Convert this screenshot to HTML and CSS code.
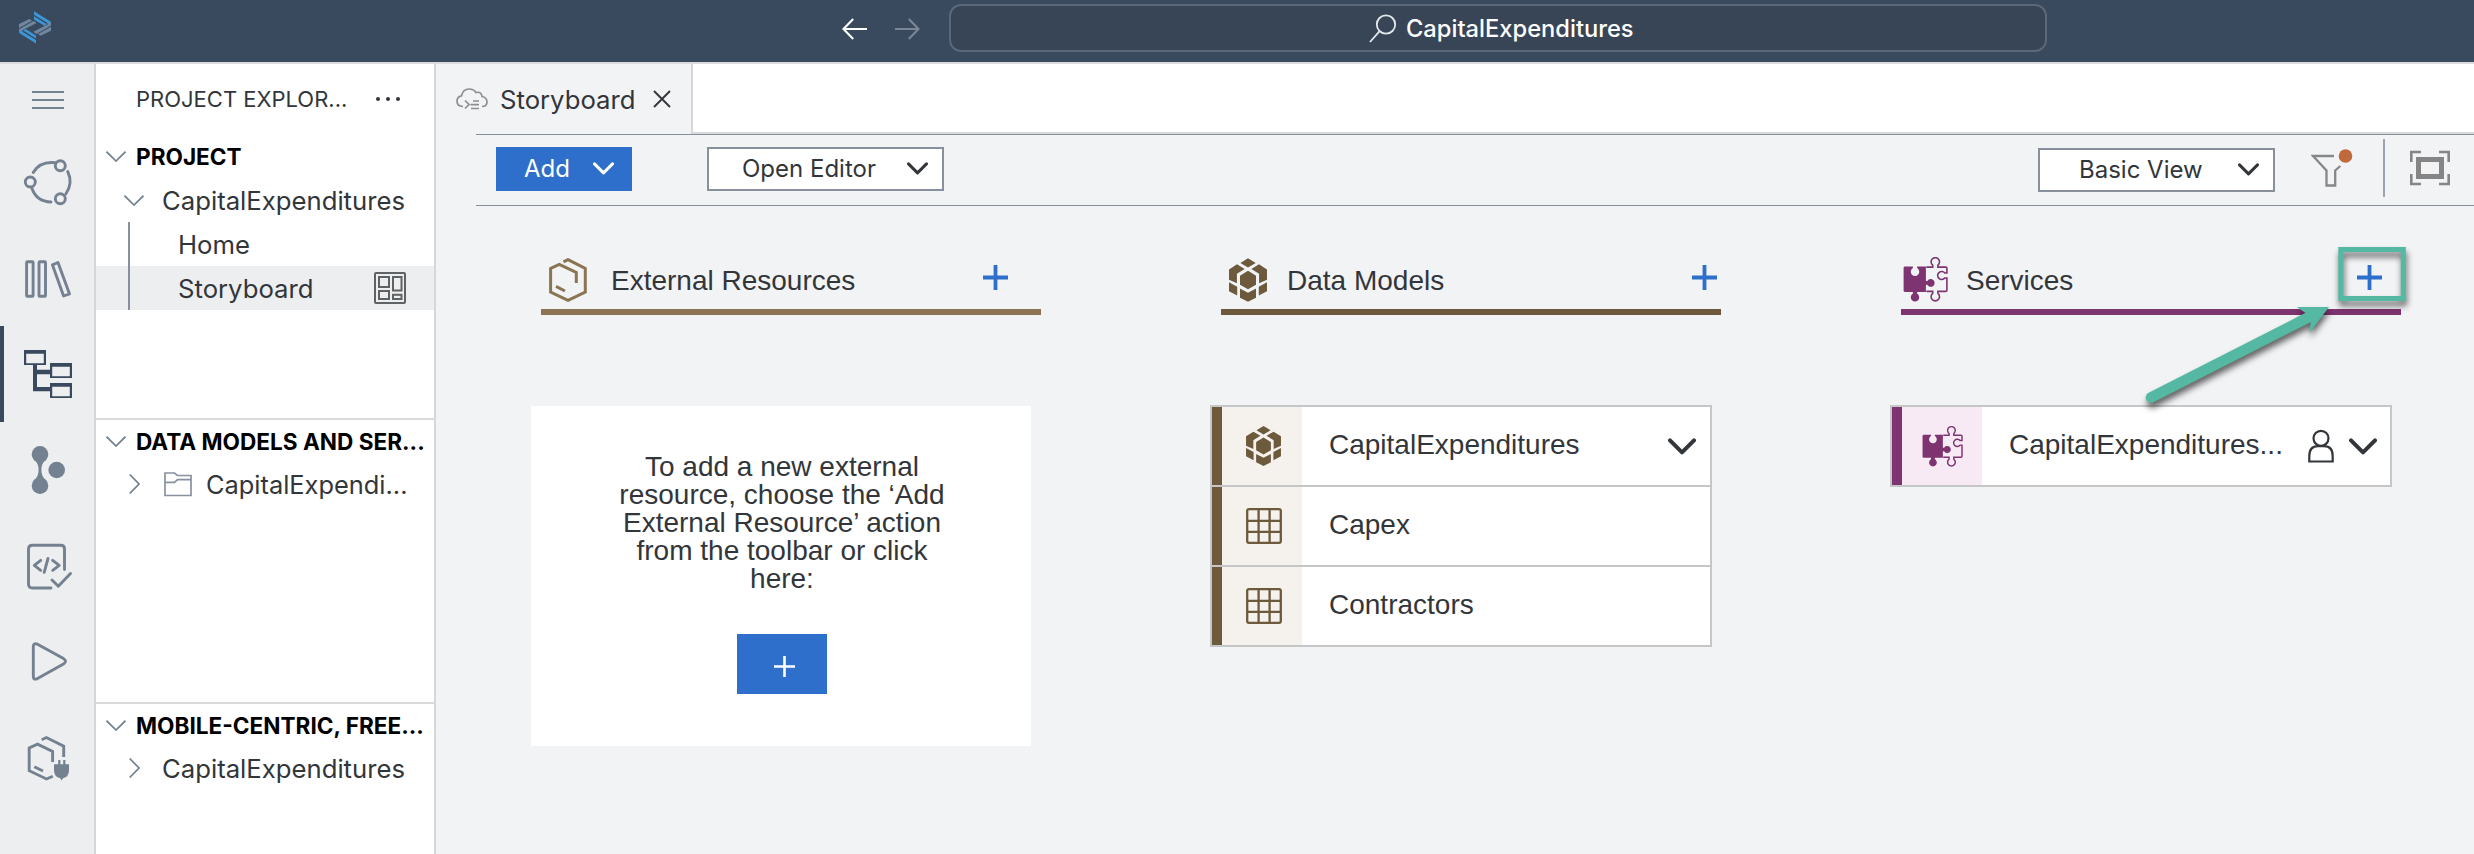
FILE: index.html
```html
<!DOCTYPE html>
<html lang="en">
<head>
<meta charset="utf-8">
<title>CapitalExpenditures</title>
<link rel="stylesheet" href="styles.css">
</head>
<body>
<svg class="defs" width="0" height="0" aria-hidden="true">
  <symbol id="cube" viewBox="0 0 38.4 44">
    <path fill="currentColor" d="M11.5 4.7 19.2 0 27 4.7 19.2 9.3zM0 11.3 8.1 6.2 15.8 10.8 8 15.6V25.4L0 21.7zM38.4 11.3 30.3 6.2 22.6 10.8 30.4 15.6V25.4L38.4 21.7zM11.1 17.7 19.2 12.7 27.3 17.7V26.7L19.2 31.3 11.1 26.7zM0 24.3 8.3 28.7V37.7L0 33.3zM38.4 24.3 30.1 28.7V37.7L38.4 33.3zM11.1 30.7 19.2 34.9 27.3 30.7V40L19.2 44 11.1 40z"/>
  </symbol>
  <symbol id="puzzle" viewBox="1902.7 256.4 45 45">
    <path fill="currentColor" d="M1904.6 266H1912.6V267.5A4.2 4.2 0 1 0 1916.8 267.5V266H1925.6V280.4H1927A3.9 3.9 0 1 1 1927 284.2H1925.6V291.3H1916.8V293A4.2 4.2 0 1 1 1912.6 293V291.3H1904.6A1.3 1.3 0 0 1 1903.3 290V267.3A1.3 1.3 0 0 1 1904.6 266z"/>
    <path fill="none" stroke="currentColor" stroke-width="1.6" d="M1926 266.5H1932.4V264.6A4.2 4.2 0 1 1 1937.6 264.6V266.5H1945.4A1.2 1.2 0 0 1 1946.6 267.7V272.4H1944.5A4 4 0 1 0 1944.5 277.4H1946.6V289.6A1.2 1.2 0 0 1 1945.4 290.8H1937.6V292.8A4.2 4.2 0 1 1 1932.4 292.8V290.8H1926"/>
  </symbol>
  <symbol id="table" viewBox="0 0 36 36">
    <g fill="none" stroke="currentColor" stroke-width="2.3"><rect x="1.2" y="1.2" width="33.6" height="33.6" rx="1.8"/><path d="M12.6 1V35M23.6 1V35M1 12.8H35M1 23.9H35"/></g>
  </symbol>
  <symbol id="down" viewBox="0 0 28 17"><path fill="none" stroke="currentColor" stroke-width="4" stroke-linecap="round" stroke-linejoin="round" d="M2 2.3 14 14.3 26 2.3"/></symbol>
  <symbol id="plus" viewBox="0 0 25 25"><path stroke="currentColor" stroke-width="3.8" d="M0 12.5H25M12.5 0V25"/></symbol>
  <symbol id="twist-open" viewBox="0 0 20 11"><path fill="none" stroke="#748190" stroke-width="1.7" d="M.5.7 10 10 19.5.7"/></symbol>
  <symbol id="twist-closed" viewBox="0 0 11 20"><path fill="none" stroke="#748190" stroke-width="1.7" d="M.7.5 10 10 .7 19.5"/></symbol>
</svg>

<header class="topbar">
  <svg class="logo" viewBox="18 10 34 35" width="34" height="35">
    <g id="half"><path fill="#3c97d8" d="M34 11.3 50.8 21.8V25L34 14.8zM34 16.2 46.8 24.2 44.4 25.8 34 19.4z"/>
    <path fill="#71879f" d="M19 24 29.5 19 32 20.8 19 28zM19 29.3 33.6 20.9 36.6 23 19 32zM24 31 19 32.2V30z"/></g>
    <use href="#half" transform="rotate(180 35 27.4)"/>
  </svg>
  <div class="nav">
    <svg width="25" height="22" viewBox="0 0 25 22"><path fill="none" stroke="#fff" stroke-width="2.1" d="M25 11H1.5M11.2 1 1.5 11 11.2 21"/></svg>
    <svg width="25" height="22" viewBox="0 0 25 22"><path fill="none" stroke="#7b8796" stroke-width="2.1" d="M0 11H23.5M13.8 1 23.5 11 13.8 21"/></svg>
  </div>
  <div class="search">
    <svg width="28" height="29" viewBox="0 0 28 29"><g fill="none" stroke="#e4e8ec" stroke-width="1.8"><circle cx="17" cy="10.5" r="9.2"/><path d="M10.6 17.2 1 28"/></g></svg>
    <span>CapitalExpenditures</span>
  </div>
</header>

<div class="workbench">
  <nav class="rail">
    <svg class="rail-menu" viewBox="0 64 94 70"><path stroke="#748190" stroke-width="2" d="M32 92H64M32 100H64M32 108H64"/></svg>
    <svg viewBox="0 134 94 96"><g class="ln"><circle cx="30.3" cy="182" r="5"/><circle cx="60.3" cy="165.7" r="5"/><circle cx="60.3" cy="198.7" r="5"/><path d="M33.2 172.5Q40 161 55.3 162.7M32 188.5Q36.5 201.5 51 202M67.7 171.5Q73.3 183 65.8 194"/></g></svg>
    <svg viewBox="0 230 94 96"><g class="ln"><rect x="26.6" y="261.8" width="6.5" height="34.5" rx=".8"/><rect x="39" y="261.8" width="6.5" height="34.5" rx=".8"/><path d="M52.4 264.8 58 262.5 69.5 294 63.6 296z"/></g></svg>
    <svg class="active" viewBox="0 326 94 96"><path fill="#39495e" fill-rule="evenodd" d="M24 350H46V365H37V369.7H50V363H72V378H50V374.3H37V387H50V383H72V398H50V391.3H33V365H24zM26.2 353.8V363.2H43.8V353.8zM52.2 366.8V376.2H69.8V366.8zM52.2 386.8V396.2H69.8V386.8z"/></svg>
    <svg viewBox="0 422 94 96"><g fill="#748190"><circle cx="40" cy="454.3" r="8.3"/><circle cx="40" cy="485.7" r="8.3"/><circle cx="56.7" cy="470" r="8.3"/><path d="M33 458.5Q38.8 463 38.6 470 38.8 477 33 481.5H47Q41.2 477 41.4 470 41.2 463 47 458.5z"/></g></svg>
    <svg viewBox="0 518 94 96"><g class="ln"><path d="M64.5 569.5V549Q64.5 545.2 60.8 545.2H32.5Q28.5 545.2 28.5 549V584Q28.5 588 32.5 588H51M52 580 58.3 586.2 70.5 573.5M40.7 560.3 34.3 565.3 40.7 570.3M48 558.5 44.2 572.3M52.7 560.3 59.2 565.3 52.7 570.3"/></g></svg>
    <svg viewBox="0 614 94 96"><path class="ln" d="M33.3 646.5Q33.3 642.5 37.5 644.2L63.5 658.6Q67.5 661.3 63.5 664L37.5 678.6Q33.3 680.5 33.3 676z"/></svg>
    <svg viewBox="0 710 94 96"><path class="ln sharp" d="M41.7 739.7 46.4 737.5 63.7 746.2V757M52.6 762V751.5L37.5 744.2 29.2 748V770.7L46.5 779 52.8 776.2M34.3 766.8 43 771"/><path fill="#748190" d="M58.2 760H60.4V764.3H63.2V760H65.4V764.3H69V770Q69 777 63 778.3L61.6 780.5 60.3 778.3Q54 777 54 770V764.3H58.2z"/></svg>
  </nav>

  <aside class="explorer">
    <div class="explorer-title"><span>PROJECT EXPLOR...</span><svg width="26" height="6" viewBox="0 0 26 6"><g fill="#32363a"><circle cx="3" cy="3" r="2"/><circle cx="13" cy="3" r="2"/><circle cx="23" cy="3" r="2"/></g></svg></div>
    <section class="project">
      <h2><svg width="20" height="11"><use href="#twist-open"/></svg>PROJECT</h2>
      <div class="row"><svg class="open" width="20" height="11"><use href="#twist-open"/></svg><span>CapitalExpenditures</span></div>
      <div class="row leaf">Home</div>
      <div class="row leaf selected"><span>Storyboard</span>
        <svg width="32" height="32" viewBox="374 272 32 32"><g fill="none" stroke="#5f6265" stroke-width="2"><rect x="375" y="273" width="30" height="30" rx="1"/><rect x="379" y="277" width="10" height="10"/><rect x="393" y="277" width="8.5" height="13.5"/><rect x="379" y="291" width="10" height="8"/><rect x="393" y="294.8" width="8.5" height="4.2"/></g></svg>
      </div>
    </section>
    <section class="models">
      <h2><svg width="20" height="11"><use href="#twist-open"/></svg>DATA MODELS AND SER...</h2>
      <div class="row closed"><svg width="11" height="20"><use href="#twist-closed"/></svg>
        <svg class="folder" width="28" height="25" viewBox="0 0 28 25"><path fill="none" stroke="#8791a0" stroke-width="1.7" d="M1 1H10.5L13.5 3.5H27V23.5H1zM1 10.3H10.5L13.5 7.6H27"/></svg><span class="short">CapitalExpendi...</span></div>
    </section>
    <section class="mobile">
      <h2><svg width="20" height="11"><use href="#twist-open"/></svg>MOBILE-CENTRIC, FREE...</h2>
      <div class="row closed"><svg width="11" height="20"><use href="#twist-closed"/></svg><span class="name">CapitalExpenditures</span></div>
    </section>
  </aside>

  <main class="editor">
    <div class="tabs">
      <div class="tab">
        <svg width="32" height="22" viewBox="0 0 32 22"><g fill="none" stroke="#8c8f92" stroke-width="1.7"><path d="M7 18.5Q1 18.3 1 13 1 8.5 5.5 7.8 7 1 13 1 18 1 20 4.5 25.5 3.3 26 8.5 31 9.5 31 14 31 18.5 26 18.5M9 12.5 13 16.5 9 20.5M17 13H23M14.5 16.7H23M15 20.5H23"/></g></svg>
        <span>Storyboard</span>
        <svg width="18" height="18" viewBox="0 0 18 18"><path stroke="#32363a" stroke-width="1.9" d="M1 1 17 17M17 1 1 17"/></svg>
      </div>
      <div class="tab-rest"></div>
    </div>

    <div class="toolbar">
      <button class="btn primary"><span>Add</span><svg width="21" height="13"><use href="#down"/></svg></button>
      <button class="btn outline open-editor"><span>Open Editor</span><svg width="21" height="13"><use href="#down"/></svg></button>
      <button class="btn outline view"><span>Basic View</span><svg width="21" height="13"><use href="#down"/></svg></button>
      <svg class="filter" width="42" height="40" viewBox="2311 148 42 40"><path fill="none" stroke="#878787" stroke-width="2.3" d="M2334 156H2313L2326.5 170.5V185.5H2335.2V170.5L2340.3 166"/><circle cx="2345.5" cy="156" r="6.8" fill="#c0693d"/></svg>
      <div class="divider"></div>
      <svg class="fit" width="40" height="36" viewBox="0 0 40 36"><g fill="none" stroke="#858585"><path stroke-width="2.6" d="M1.3 12V2H11M29 2H38.7V12M38.7 24V34H29M11 34H1.3V24"/><rect x="8.5" y="9.5" width="23" height="17" stroke-width="5"/></g></svg>
    </div>

    <div class="board">
      <section class="col external">
        <div class="col-head">
          <svg class="col-icon" width="38" height="44" viewBox="0 0 38 44"><path fill="none" stroke="currentColor" stroke-width="3" d="M14.5 3.8 19 1.6 36.3 10.5V34L19 42.4 1.6 34V10.5L10.3 6.3 27.3 14.5V25M7 28.3 16 33"/></svg>
          <h3>External Resources</h3>
          <svg class="add" width="25" height="25"><use href="#plus"/></svg>
        </div>
        <div class="hint">
          <p>To add a new external<br>resource, choose the ‘Add<br>External Resource’ action<br>from the toolbar or click<br>here:</p>
          <button class="hint-add"><svg width="21" height="21" viewBox="0 0 21 21"><path stroke="#fff" stroke-width="2.6" d="M0 10.5H21M10.5 0V21"/></svg></button>
        </div>
      </section>

      <section class="col data">
        <div class="col-head">
          <svg class="col-icon" width="38" height="44"><use href="#cube"/></svg>
          <h3>Data Models</h3>
          <svg class="add" width="25" height="25"><use href="#plus"/></svg>
        </div>
        <div class="cards">
          <div class="card"><i class="bar"></i><div class="tint"><svg width="35" height="40"><use href="#cube"/></svg></div><span>CapitalExpenditures</span><svg class="more" width="28" height="17"><use href="#down"/></svg></div>
          <div class="card"><i class="bar"></i><div class="tint"><svg width="36" height="36"><use href="#table"/></svg></div><span>Capex</span></div>
          <div class="card"><i class="bar"></i><div class="tint"><svg width="36" height="36"><use href="#table"/></svg></div><span>Contractors</span></div>
        </div>
      </section>

      <section class="col services">
        <div class="col-head">
          <svg class="col-icon" width="45" height="45"><use href="#puzzle"/></svg>
          <h3>Services</h3>
          <svg class="add" width="25" height="25"><use href="#plus"/></svg>
        </div>
        <div class="cards">
          <div class="card"><i class="bar"></i><div class="tint"><svg width="41" height="41"><use href="#puzzle"/></svg></div><span>CapitalExpenditures...</span>
            <svg class="user" width="26" height="34" viewBox="0 0 26 34"><g fill="none" stroke="#32363a" stroke-width="2.2"><circle cx="13" cy="9.3" r="7.5"/><path d="M1.3 32.5V27Q1.3 17.2 10 17.2H16Q24.7 17.2 24.7 27V32.5z"/></g></svg>
            <svg class="more" width="28" height="17"><use href="#down"/></svg></div>
        </div>
      </section>
    </div>
  </main>
</div>

<svg class="callout" width="290" height="175" viewBox="2130 240 290 175">
  <g class="callout-shape" fill="none" stroke="#54b8a2">
    <rect x="2340.8" y="249.5" width="62.5" height="49" stroke-width="5"/>
    <path d="M2151 397.5 2309 317" stroke-width="10.5" stroke-linecap="round"/>
    <path d="M2296.7 307H2329L2309.5 332.7 2310.7 321.7 2305.3 312.7z" fill="#54b8a2" stroke="none"/>
  </g>
</svg>
</body>
</html>
```
FILE: styles.css
```css
* { box-sizing: border-box; }
body {
  margin: 0;
  height: 854px;
  display: flex;
  flex-direction: column;
  overflow: hidden;
  position: relative;
  background: #f2f3f5;
  color: #32363a;
  font-family: Inter, "Liberation Sans", sans-serif;
  font-size: 25.7px;
}
svg { display: block; flex: none; }
.defs { position: absolute; }
h2, h3, p { margin: 0; }
button { border: 0; padding: 0; font: inherit; color: inherit; }

/* Top bar */
.topbar {
  flex: none;
  height: 64px;
  display: flex;
  align-items: flex-start;
  background: #39495e;
  border-bottom: 2px solid #dcdcde;
}
.logo { margin: 10px 0 0 18px; }
.nav { display: flex; gap: 28px; margin: 18px 0 0 790px; }
.search {
  margin: 4px 0 0 29px;
  width: 1098px;
  height: 48px;
  display: flex;
  align-items: center;
  gap: 9px;
  padding-left: 418px;
  background: #374556;
  border: 2px solid #5a6878;
  border-radius: 12px;
  color: #fff;
  font-size: 23.7px;
  font-weight: 500;
  white-space: nowrap;
}

.workbench { flex: 1; display: flex; min-height: 0; }

/* Icon rail */
.rail {
  width: 96px;
  flex: none;
  background: #edeef0;
  border-right: 2px solid #d6d7da;
}
.rail svg { width: 94px; height: 96px; }
.rail .rail-menu { height: 70px; }
.rail .active { box-shadow: inset 4px 0 0 #39495e; }
.ln { fill: none; stroke: #748190; stroke-width: 2.9; stroke-linecap: round; stroke-linejoin: round; }
.sharp { stroke-linecap: butt; stroke-linejoin: miter; }

/* Explorer */
.explorer {
  width: 340px;
  flex: none;
  display: flex;
  flex-direction: column;
  background: #fff;
  border-right: 2px solid #d6d7da;
  white-space: nowrap;
}
.explorer-title {
  height: 70px;
  display: flex;
  align-items: center;
  justify-content: space-between;
  padding: 0 33px 0 40px;
  font-size: 22px;
}
.explorer section { border-bottom: 2px solid #d9dadc; }
.explorer .project { height: 286px; }
.explorer .models { height: 284px; }
.explorer .mobile { flex: 1; border: 0; }
.explorer h2 {
  height: 42px;
  display: flex;
  align-items: center;
  gap: 10px;
  padding-left: 10px;
  color: #000;
  font-size: 22.6px;
  font-weight: 700;
}
.explorer .project h2 { height: 44px; }
.row { height: 44px; display: flex; align-items: center; }
.row .open { margin: 0 18px 0 28px; }
.leaf { position: relative; padding-left: 82px; }
.leaf::before {
  content: "";
  position: absolute;
  left: 32px;
  top: 0;
  width: 2px;
  height: 44px;
  background: #87909c;
}
.selected { justify-content: space-between; padding-right: 28px; background: #edeef0; }
.closed { padding-left: 33px; }
.folder { margin: 0 14px 0 24px; }
.closed .short { font-size: 25.4px; }
.closed .name { margin-left: 22px; }

/* Editor */
.editor { flex: 1; min-width: 0; }
.tabs { display: flex; height: 70px; }
.tab {
  width: 257px;
  display: flex;
  align-items: center;
  padding-left: 20px;
  border-right: 2px solid #d6d7da;
}
.tab span { margin: 0 18px 0 12px; }
.tab-rest { flex: 1; background: #fff; border-bottom: 2px solid #d9dadc; }

.toolbar {
  height: 72px;
  display: flex;
  align-items: flex-start;
  margin-left: 40px;
  padding: 12px 24px 0 20px;
  border-top: 1px solid #87909a;
  border-bottom: 1px solid #87909a;
}
.btn {
  height: 44px;
  display: flex;
  align-items: center;
  justify-content: space-between;
  font-size: 24px;
  padding-bottom: 2px;
}
.primary { width: 136px; padding-left: 28px; padding-right: 18px; background: #2d6fca; color: #fff; }
.outline { background: #fff; border: 2px solid #87909c; }
.open-editor { width: 237px; margin-left: 75px; padding-left: 33px; padding-right: 14px; }
.view { width: 237px; margin: 1px 36px 0 auto; padding-left: 39px; padding-right: 14px; }
.filter { margin-top: 1px; }
.divider { width: 2px; height: 58px; margin: -8px 25px 0 30px; background: #9aa3ad; }
.fit { margin-top: 3px; }

/* Storyboard columns */
.board {
  display: grid;
  grid-template-columns: 500px 500px 500px;
  column-gap: 180px;
  padding: 44px 0 0 105px;
  font-family: "Liberation Sans", Arial, sans-serif;
  font-size: 28px;
}
.col-head {
  height: 65px;
  display: flex;
  align-items: center;
  padding-left: 8px;
  border-bottom: 6px solid currentColor;
}
.col-head h3 { font-size: 28px; font-weight: 400; color: #32363a; margin: 2px 0 0 24px; }
.col-head .add { margin: -4px 33px 0 auto; color: #2d6fca; }
.external .col-head { color: #8b7452; }
.data .col-head { color: #6d5a3c; }
.data .col-head h3 { margin-left: 20px; }
.data .add { margin-right: 4px; }
.services .col-head { color: #7e3470; padding-left: 2px; }
.services .col-head h3 { margin-left: 18px; }
.services .add { margin-right: 19px; }

.hint {
  width: 500px;
  height: 340px;
  margin: 91px 0 0 -10px;
  padding: 47px 0 0 2px;
  display: flex;
  flex-direction: column;
  align-items: center;
  background: #fff;
  line-height: 28px;
  text-align: center;
}
.hint-add {
  width: 90px;
  height: 60px;
  margin-top: 41px;
  padding: 4px 0 0 4px;
  display: flex;
  align-items: center;
  justify-content: center;
  background: #2d6fca;
}

.cards {
  width: 502px;
  margin: 90px 0 0 -11px;
  border: 2px solid #c5c6c7;
}
.card { height: 80px; display: flex; align-items: center; background: #fff; border-bottom: 2px solid #c5c6c7; }
.card:last-child { height: 78px; border-bottom: 0; }
.bar { align-self: stretch; width: 10px; background: #6d5a3c; }
.tint {
  align-self: stretch;
  width: 80px;
  padding-left: 3px;
  display: flex;
  align-items: center;
  justify-content: center;
  background: #f5f1ec;
  color: #6d5a3c;
}
.card span { margin: -2px 0 0 27px; }
.card .more { margin: 0 14px 0 auto; color: #32363a; }
.services .bar { background: #7e3470; }
.services .tint { background: #f7eaf4; color: #7e3470; padding-left: 0; }
.card .user { margin: 0 15px 0 auto; }
.card .user + .more { margin-left: 0; margin-right: 13px; }

/* Highlight drawn over the board */
.callout { position: absolute; left: 2130px; top: 240px; }
.callout-shape { filter: drop-shadow(1px 5px 3px rgba(0, 0, 0, .6)); }
```
